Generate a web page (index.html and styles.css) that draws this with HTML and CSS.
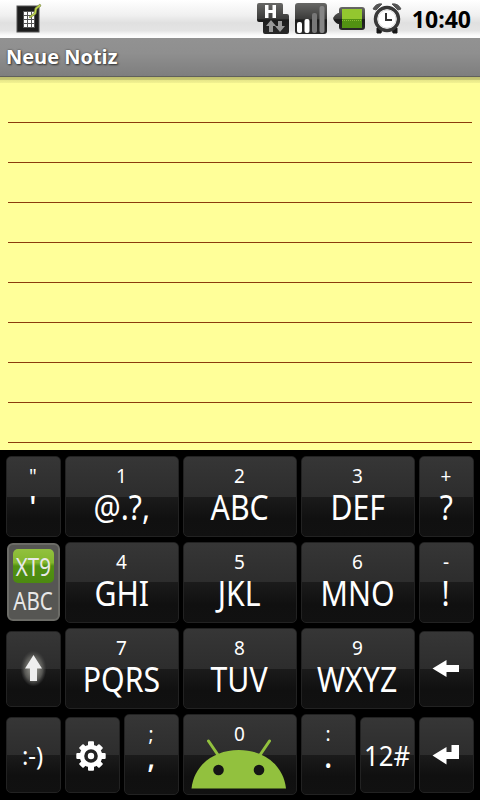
FILE: index.html
```html
<!DOCTYPE html>
<html lang="de">
    <head>
        <meta charset="UTF-8" />
        <meta name="viewport" content="width=device-width, initial-scale=1.0" />
        <title>Neue Notiz</title>
        <link rel="stylesheet" href="styles.css">
    </head>
    <body>
        <div class="phone">
            <div class="status-bar">
                <svg class="note-icon" width="28" height="34" viewBox="0 0 28 34">
                    <rect x="1" y="6" width="22" height="26" fill="#1c1c1c" stroke="#555" />
                    <rect x="7" y="11" width="12" height="17" fill="#555" />
                    <path d="M8 12h3v3H8zM12 12h3v3h-3zM16 12h2v3h-2zM8 16h3v3H8zM12 16h3v3h-3zM16 16h2v3h-2zM8 20h3v3H8zM12 20h3v3h-3zM16 20h2v3h-2zM8 24h3v3H8zM12 24h3v3h-3zM16 24h2v3h-2z" fill="#fff" />
                    <path d="M13 17l5-4 1-5 5-4 1 2-4 3-1 5-6 4z" fill="#c0d84a" stroke="#747d45" stroke-width=".6" />
                </svg>

                <div class="status-icons">
                    <svg width="32" height="32" viewBox="0 0 32 32">
                        <defs>
                            <linearGradient id="dark" x1="0" y1="0" x2="0" y2="1">
                                <stop offset="0" stop-color="#686866" />
                                <stop offset=".5" stop-color="#3c3c3b" />
                                <stop offset=".55" stop-color="#1b1b1b" />
                                <stop offset="1" stop-color="#292929" />
                            </linearGradient>
                        </defs>
                        <path d="M2 0h22q2 0 2 2v9h4q2 0 2 2v16q0 2-2 2H8q-2 0-2-2V19H2q-2 0-2-2V2q0-2 2-2z" fill="url(#dark)" />
                        <path d="M8 2h3.500v5h4V2H19v13h-3.500v-5h-4v5H8z" fill="#fff" />
                        <path d="M14 17l5 6h-3v6h-4v-6H9zM21 18h4v5h3l-5 6-5-6h3z" fill="#999" />
                    </svg>
                    <svg width="32" height="32" viewBox="0 0 32 32">
                        <rect width="32" height="31" rx="3" fill="url(#dark)" />
                        <rect x="2" y="19" width="5" height="11" rx="2" fill="#fff" />
                        <rect x="9.500" y="16" width="5" height="14" rx="2" fill="#fff" />
                        <rect x="17" y="10" width="5" height="20" rx="2" fill="#777" />
                        <rect x="24.500" y="3" width="5" height="27" rx="2" fill="#858585" />
                    </svg>
                    <svg width="32" height="32" viewBox="0 0 32 32">
                        <path d="M9 4h20q3 0 3 3v17q0 3-3 3H9q-3 0-3-3v-3H5q-4-2-5-6 1-3 5-5h1V7q0-3 3-3z" fill="url(#dark)" />
                        <rect x="9" y="6" width="20" height="10" fill="#93c72f" />
                        <rect x="9" y="16" width="20" height="9" fill="#529212" />
                        <path d="M9 17.500h20" stroke="#8abd35" stroke-dasharray="1 1" />
                    </svg>
                    <svg class="alarm" width="30" height="32" viewBox="0 0 30 32">
                        <path d="M1 6q3-6 9-5L4 7zM29 6q-3-6-9-5l6 6z" fill="#555" stroke="#555" />
                        <path d="M5 25h5l-1 5H5zM20 25h5v5h-4z" fill="#161616" stroke="#161616" />
                        <circle cx="15" cy="16" r="11.500" fill="#fff" stroke="#383838" stroke-width="3.500" />
                        <circle cx="15" cy="16" r="9" fill="none" stroke="#ddd" />
                        <path d="M14 10v7h6" fill="none" stroke="#333" stroke-width="2" />
                    </svg>
                    <span class="clock">10:40</span>
                </div>
            </div>

            <div class="title-bar">Neue Notiz</div>

            <div class="note">
                <div class="lines"></div>
            </div>

            <div class="keyboard">
                <div class="key"><span class="hint">"</span><span class="main heavy">'</span></div>
                <div class="key wide"><span class="hint">1</span><span class="main">@.?,</span></div>
                <div class="key wide"><span class="hint">2</span><span class="main">ABC</span></div>
                <div class="key wide"><span class="hint">3</span><span class="main">DEF</span></div>
                <div class="key"><span class="hint">+</span><span class="main">?</span></div>

                <div class="key mode">
                    <span class="mode-on"><span>XT9</span></span>
                    <span class="mode-off"><span>ABC</span></span>
                </div>
                <div class="key wide"><span class="hint">4</span><span class="main">GHI</span></div>
                <div class="key wide"><span class="hint">5</span><span class="main">JKL</span></div>
                <div class="key wide"><span class="hint">6</span><span class="main">MNO</span></div>
                <div class="key"><span class="hint">-</span><span class="main">!</span></div>

                <div class="key short">
                    <svg class="shift" width="30" height="40" viewBox="0 0 30 40">
                        <defs>
                            <radialGradient id="glow">
                                <stop offset=".3" stop-color="#85857f" />
                                <stop offset=".7" stop-color="#555552" />
                                <stop offset="1" stop-color="#444" stop-opacity="0" />
                            </radialGradient>
                        </defs>
                        <ellipse cx="15.500" cy="19.500" rx="13" ry="18" fill="url(#glow)" />
                        <path d="M15.500 6l8.500 13.500h-5V32h-7V19.500H7z" fill="#eee" />
                    </svg>
                </div>
                <div class="key wide"><span class="hint">7</span><span class="main">PQRS</span></div>
                <div class="key wide"><span class="hint">8</span><span class="main">TUV</span></div>
                <div class="key wide"><span class="hint">9</span><span class="main">WXYZ</span></div>
                <div class="key short">
                    <svg class="arrow" width="28" height="20" viewBox="0 0 28 20">
                        <path d="M.5 9.500L14.500 1v5H27v7H14.500v5z" fill="#fff" />
                    </svg>
                </div>

                <div class="key short"><span class="label smiley">:-)</span></div>
                <div class="key short">
                    <svg class="gear" width="30" height="30" viewBox="-15 -15 30 30">
                        <g fill="#fff">
                            <circle r="11.300" />
                            <rect x="-3" y="-14.700" width="6" height="29.400" rx="1" />
                            <rect x="-14.700" y="-3" width="29.400" height="6" rx="1" />
                            <rect x="-3" y="-14.200" width="6" height="28.400" rx="1" transform="rotate(45)" />
                            <rect x="-3" y="-14.200" width="6" height="28.400" rx="1" transform="rotate(-45)" />
                        </g>
                        <circle r="5" fill="#fff" stroke="#222" stroke-width="3.600" />
                    </svg>
                </div>
                <div class="key"><span class="hint">;</span><span class="main heavy raised">,</span></div>
                <div class="key wide space">
                    <span class="hint">0</span>
                    <svg class="robot" width="96" height="50" viewBox="0 0 96 50">
                        <path d="M17.500 2L27 16M78.500 2L69 16" stroke="#92c13e" stroke-width="3" stroke-linecap="round" />
                        <path d="M0.500 49.500C3 26 23 11 47.800 11S92.500 26 95 49.500z" fill="#92c13e" />
                        <circle cx="27.500" cy="31" r="5.300" fill="#151515" />
                        <circle cx="68" cy="31" r="5.300" fill="#151515" />
                    </svg>
                </div>
                <div class="key"><span class="hint">:</span><span class="main heavy raised">.</span></div>
                <div class="key short"><span class="label">12#</span></div>
                <div class="key short">
                    <svg class="enter" width="28" height="20" viewBox="0 0 28 20">
                        <path d="M.5 10.500L14.500 2v5h5V0H27v14H14.500v5.500z" fill="#fff" />
                    </svg>
                </div>
            </div>
        </div>
    </body>
</html>
```

FILE: styles.css
```css
* {
    margin: 0;
    padding: 0;
    box-sizing: border-box;
}
body {
    font-family: "Noto Sans", "Open Sans", sans-serif;
    background: #000;
}
svg {
    display: block;
    flex-shrink: 0;
}

.phone {
    display: flex;
    flex-direction: column;
    width: 480px;
    height: 800px;
    overflow: hidden;
}

.status-bar {
    display: flex;
    justify-content: space-between;
    height: 38px;
    padding: 0 9px 0 16px;
    background: linear-gradient(#fff, #f0f0f0 40%, #e0e0e0 60%, #e4e4e4 80%, #fafafa 92%, #fff);
}
.status-icons {
    display: flex;
    gap: 6px;
    padding-top: 3px;
}
.alarm {
    margin-left: 1px;
}
.clock {
    margin-left: 4px;
    font-family: "Open Sans", sans-serif;
    font-size: 23px;
    font-weight: bold;
    line-height: 33px;
    color: #000;
}

.title-bar {
    height: 39px;
    padding-left: 6px;
    border-bottom: 1px solid #60605c;
    background: linear-gradient(#929292, #8f8f8f 40%, #7e7e7e);
    color: #fff;
    font-family: "Open Sans", sans-serif;
    font-size: 20px;
    font-weight: bold;
    line-height: 37px;
    text-shadow: 1px 1px 2px #333, 0 0 2px #444;
}

.note {
    height: 373px;
    padding: 45px 8px 0;
    background: linear-gradient(#bcbc6c, #c8c876 3px, #e6e688 3px, #f3f391 6px, #ffff99 6px);
}
/* one ruled line every 40px */
.lines {
    height: 321px;
    background: linear-gradient(#8b3c0c 1px, transparent 1px) 0 0 / 100% 40px;
}

.keyboard {
    flex: 1;
    display: grid;
    grid-template-columns: repeat(8, 55px);
    grid-auto-rows: 81px;
    gap: 5px 4px;
    padding: 6px 0 0 6px;
    background: #000;
}
.key {
    display: flex;
    flex-direction: column;
    align-items: center;
    height: 81px;
    padding: 8px 1px 0 0;
    border: 1px solid #222;
    border-radius: 5px;
    background: linear-gradient(#363636, #2d2d2d 50%, #1b1b1b 50%, #101010 78%, #111);
    color: #fff;
}
.wide {
    grid-column: span 2;
}
.short {
    height: 76px;
    margin-top: 3px;
    padding: 0 1px 0 0;
    justify-content: center;
}
.hint {
    font-size: 19px;
    line-height: 22px;
}
.main {
    margin-top: 1px;
    font-size: 34px;
    line-height: 38px;
    transform: scaleX(0.89);
}
.heavy {
    font-size: 30px;
    font-weight: 600;
}
.raised {
    margin-top: -7px;
}
.label {
    font-size: 28px;
    line-height: 38px;
    transform: scaleX(0.92);
}
.smiley {
    font-size: 26px;
}

.mode {
    width: 53px;
    height: 78px;
    margin: 1px 0 0 1px;
    padding: 4px 4px 0;
    background: #565653;
    border: 2px solid #6c6c67;
    border-radius: 6px;
    font-size: 25px;
}
.mode-on,
.mode-off {
    display: flex;
    justify-content: center;
    width: 41px;
    height: 34px;
    line-height: 34px;
    color: #e8e8e8;
}
.mode-on {
    border-radius: 5px;
    background: linear-gradient(#92c13e, #83b72d 40%, #529212 50%, #4c8910);
}
.mode-on span,
.mode-off span {
    transform: scaleX(0.82);
}

.gear {
    margin: 1px 2px 0 0;
}
.robot {
    margin: -6px 1px 0 0;
}
```
